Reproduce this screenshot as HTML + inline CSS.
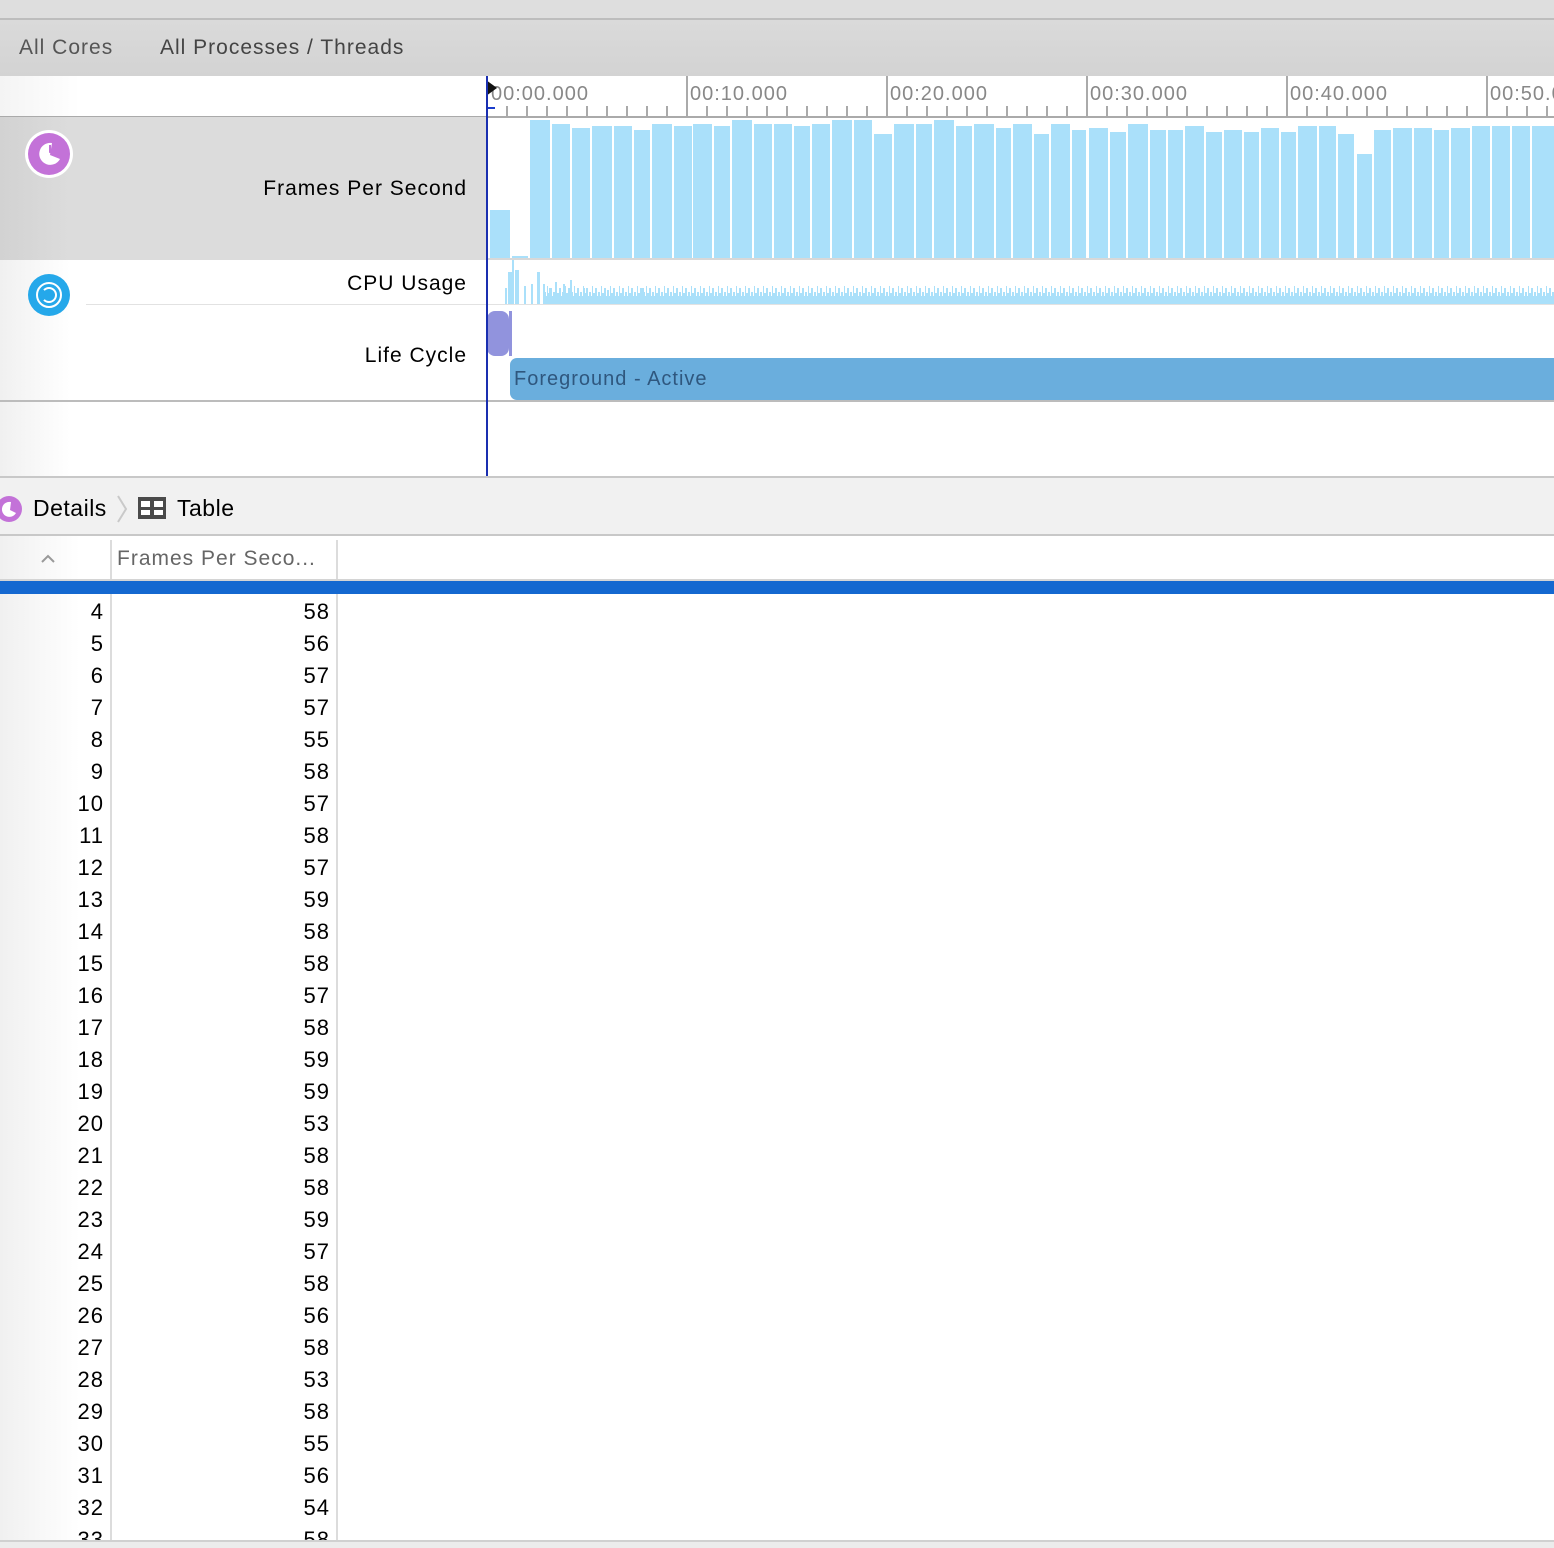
<!DOCTYPE html>
<html><head><meta charset="utf-8"><style>
*{margin:0;padding:0;box-sizing:border-box}
body{width:1554px;height:1548px;overflow:hidden;background:#fff;font-family:"Liberation Sans",sans-serif;position:relative}
.a{position:absolute}
.t{font-size:21px;color:#000;white-space:nowrap;letter-spacing:1px}
</style></head><body>
<div class="a" style="left:0;top:0;width:1554px;height:18px;background:#dedede"></div>
<div class="a" style="left:0;top:18px;width:1554px;height:2px;background:#bdbdbd"></div>
<div class="a" style="left:0;top:20px;width:1554px;height:56px;background:linear-gradient(#dadada,#d3d3d3)"></div>
<div class="a t" style="left:19px;top:36px;color:#555">All Cores</div>
<div class="a t" style="left:160px;top:36px;color:#444">All Processes / Threads</div>

<!-- ruler -->
<div class="a" style="left:0;top:76px;width:487px;height:40px;background:linear-gradient(90deg,#f4f4f4,#fff 80px)"></div>
<svg class="a" style="left:0;top:76px" width="1554" height="42">
<g stroke="#aaa" stroke-width="2">
<line x1="0" y1="41" x2="1554" y2="41"/>
<line x1="687" y1="0" x2="687" y2="41"/><line x1="887" y1="0" x2="887" y2="41"/><line x1="1087" y1="0" x2="1087" y2="41"/><line x1="1287" y1="0" x2="1287" y2="41"/><line x1="1487" y1="0" x2="1487" y2="41"/>
</g>
<g stroke="#aaa" stroke-width="2">
<path d="M507 30V41M527 30V41M547 30V41M567 30V41M587 30V41M607 30V41M627 30V41M647 30V41M667 30V41M707 30V41M727 30V41M747 30V41M767 30V41M787 30V41M807 30V41M827 30V41M847 30V41M867 30V41M907 30V41M927 30V41M947 30V41M967 30V41M987 30V41M1007 30V41M1027 30V41M1047 30V41M1067 30V41M1107 30V41M1127 30V41M1147 30V41M1167 30V41M1187 30V41M1207 30V41M1227 30V41M1247 30V41M1267 30V41M1307 30V41M1327 30V41M1347 30V41M1367 30V41M1387 30V41M1407 30V41M1427 30V41M1447 30V41M1467 30V41M1507 30V41M1527 30V41M1547 30V41"/>
</g>
<g font-family="Liberation Sans" font-size="20" fill="#888" letter-spacing="1">
<text x="491" y="24">00:00.000</text><text x="690" y="24">00:10.000</text><text x="890" y="24">00:20.000</text><text x="1090" y="24">00:30.000</text><text x="1290" y="24">00:40.000</text><text x="1490" y="24">00:50.000</text>
</g>
<path d="M486 4L497 12L486 20Z" fill="#111"/>
<path d="M487 40V32H495" stroke="#1a3ccc" stroke-width="2" fill="none"/>
</svg>

<!-- FPS row -->
<div class="a" style="left:0;top:117px;width:487px;height:143px;background:linear-gradient(90deg,#d2d2d2,#dcdcdc 70px)"></div>
<div class="a" style="left:25px;top:130px;width:48px;height:48px;border-radius:50%;background:#fff"></div>
<div class="a" style="left:28px;top:133px;width:42px;height:42px;border-radius:50%;background:#c372d8"></div>
<svg class="a" style="left:28px;top:133px" width="42" height="42"><path d="M24 10A11 11 0 1 0 32 26L22 22Z" fill="#fff"/><path d="M22 12L22 19L29 22" stroke="#c372d8" stroke-width="2" fill="none"/></svg>
<div class="a t" style="right:1087px;top:177px">Frames Per Second</div>
<svg class="a" style="left:487px;top:117px" width="1067" height="143">
<rect x="0" y="141" width="1067" height="2" fill="#d8d8d8"/>
<g fill="#aae0fa" transform="translate(-487,0)">
<rect x="490" y="93" width="20" height="48"/><rect x="512" y="139" width="16" height="2"/>
<rect x="530" y="3" width="20" height="138"/><rect x="552" y="7" width="18" height="134"/><rect x="572" y="11" width="18" height="130"/><rect x="592" y="9" width="20" height="132"/><rect x="614" y="9" width="18" height="132"/><rect x="634" y="13" width="16" height="128"/><rect x="652" y="7" width="20" height="134"/><rect x="674" y="9" width="18" height="132"/><rect x="693" y="7" width="19" height="134"/><rect x="714" y="9" width="16" height="132"/><rect x="732" y="3" width="20" height="138"/><rect x="754" y="7" width="18" height="134"/><rect x="774" y="7" width="18" height="134"/><rect x="794" y="9" width="16" height="132"/><rect x="812" y="7" width="18" height="134"/><rect x="832" y="3" width="20" height="138"/><rect x="854" y="3" width="18" height="138"/><rect x="874" y="17" width="18" height="124"/><rect x="894" y="7" width="20" height="134"/><rect x="916" y="7" width="16" height="134"/><rect x="934" y="3" width="20" height="138"/><rect x="956" y="9" width="16" height="132"/><rect x="974" y="7" width="20" height="134"/><rect x="996" y="11" width="15" height="130"/><rect x="1013" y="7" width="19" height="134"/><rect x="1034" y="17" width="15" height="124"/><rect x="1051" y="7" width="19" height="134"/><rect x="1072" y="13" width="14" height="128"/><rect x="1089" y="11" width="19" height="130"/><rect x="1110" y="15" width="16" height="126"/><rect x="1128" y="7" width="20" height="134"/><rect x="1150" y="13" width="16" height="128"/><rect x="1168" y="13" width="15" height="128"/><rect x="1185" y="9" width="19" height="132"/><rect x="1206" y="15" width="16" height="126"/><rect x="1224" y="13" width="18" height="128"/><rect x="1244" y="15" width="15" height="126"/><rect x="1261" y="11" width="18" height="130"/><rect x="1281" y="15" width="15" height="126"/><rect x="1298" y="9" width="19" height="132"/><rect x="1319" y="9" width="17" height="132"/><rect x="1338" y="17" width="16" height="124"/><rect x="1357" y="37" width="15" height="104"/><rect x="1374" y="13" width="17" height="128"/><rect x="1393" y="11" width="19" height="130"/><rect x="1414" y="11" width="18" height="130"/><rect x="1434" y="13" width="15" height="128"/><rect x="1451" y="11" width="19" height="130"/><rect x="1472" y="9" width="18" height="132"/><rect x="1492" y="9" width="18" height="132"/><rect x="1512" y="9" width="18" height="132"/><rect x="1532" y="9" width="22" height="132"/>
</g></svg>

<!-- CPU + lifecycle -->
<div class="a" style="left:0;top:260px;width:487px;height:141px;background:linear-gradient(90deg,#f0f0f0,#fff 70px)"></div>
<div class="a" style="left:28px;top:274px;width:42px;height:42px;border-radius:50%;background:#25a8ea"></div>
<div class="a" style="left:36px;top:282px;width:26px;height:26px;border-radius:50%;border:2px solid #fff"></div>
<div class="a" style="left:41px;top:287px;width:16px;height:16px;border-radius:50%;border:2px solid #fff;border-left-color:transparent"></div>
<div class="a t" style="right:1087px;top:272px">CPU Usage</div>
<div class="a" style="left:86px;top:304px;width:1468px;height:1px;background:#e2e2e2"></div>
<div class="a t" style="right:1087px;top:344px">Life Cycle</div>
<svg class="a" style="left:487px;top:260px" width="1067" height="50">
<defs><pattern id="p" width="9" height="20" patternUnits="userSpaceOnUse"><rect x="0" y="8" width="2" height="12" fill="#aae0fa"/><rect x="3" y="12" width="2" height="8" fill="#aae0fa"/><rect x="6" y="6" width="1" height="14" fill="#aae0fa"/><rect x="7" y="13" width="2" height="7" fill="#aae0fa"/></pattern></defs>
<g fill="#aae0fa">
<rect x="18" y="28" width="2" height="16"/><rect x="21" y="12" width="4" height="32"/><rect x="25" y="0" width="2" height="44"/><rect x="28" y="10" width="4" height="34"/>
<rect x="37" y="26" width="2" height="18"/><rect x="44" y="24" width="2" height="20"/><rect x="50" y="12" width="3" height="32"/><rect x="56" y="24" width="2" height="20"/><rect x="62" y="28" width="2" height="16"/><rect x="68" y="22" width="2" height="22"/><rect x="76" y="24" width="2" height="20"/><rect x="83" y="20" width="2" height="24"/><rect x="96" y="28" width="2" height="16"/><rect x="120" y="30" width="2" height="14"/><rect x="155" y="28" width="2" height="16"/>
</g>
<rect x="56" y="24" width="1011" height="20" fill="url(#p)"/>
<rect x="56" y="36" width="1011" height="8" fill="#aae0fa"/>
</svg>
<div class="a" style="left:487px;top:311px;width:22px;height:45px;border-radius:8px;background:#9193dd"></div>
<div class="a" style="left:509px;top:311px;width:3px;height:45px;background:#9193dd"></div>
<div class="a" style="left:510px;top:358px;width:1044px;height:42px;border-radius:7px 0 0 7px;background:#6aaedd"></div>
<div class="a t" style="left:514px;top:368px;color:#2f577e;font-size:20px">Foreground - Active</div>
<div class="a" style="left:0;top:400px;width:1554px;height:2px;background:#bcbcbc"></div>
<div class="a" style="left:0;top:402px;width:487px;height:74px;background:linear-gradient(90deg,#f0f0f0,#fff 70px)"></div>
<div class="a" style="left:486px;top:76px;width:2px;height:400px;background:#1a2fb0"></div>

<!-- details bar -->
<div class="a" style="left:0;top:476px;width:1554px;height:2px;background:#c8c8c8"></div>
<div class="a" style="left:0;top:478px;width:1554px;height:56px;background:#f1f1f1"></div>
<div class="a" style="left:-4px;top:496px;width:26px;height:26px;border-radius:50%;background:#c372d8"></div>
<svg class="a" style="left:-4px;top:496px" width="26" height="26"><path d="M15 6A7.5 7.5 0 1 0 20 17L14 14Z" fill="#fff"/></svg>
<div class="a t" style="left:33px;top:495px;font-size:23px;letter-spacing:0.5px">Details</div>
<svg class="a" style="left:115px;top:494px" width="14" height="30"><path d="M3 2L11 15L3 28" stroke="#c9c9c9" stroke-width="2" fill="none"/></svg>
<svg class="a" style="left:138px;top:497px" width="28" height="22"><rect width="28" height="22" fill="#4a4a4a"/><rect x="3" y="4" width="9" height="6" fill="#fff"/><rect x="16" y="4" width="9" height="6" fill="#fff"/><rect x="3" y="13" width="9" height="5" fill="#fff"/><rect x="16" y="13" width="9" height="5" fill="#fff"/></svg>
<div class="a t" style="left:177px;top:495px;font-size:23px;letter-spacing:0.5px">Table</div>
<div class="a" style="left:0;top:534px;width:1554px;height:2px;background:#c8c8c8"></div>

<!-- table -->
<div class="a" style="left:0;top:536px;width:110px;height:1004px;background:linear-gradient(90deg,#f0f0f0,#fff 80px)"></div>
<div class="a" style="left:110px;top:540px;width:2px;height:1000px;background:#dcdcdc"></div>
<div class="a" style="left:336px;top:540px;width:2px;height:1000px;background:#dcdcdc"></div>
<svg class="a" style="left:40px;top:552px" width="18" height="12"><path d="M2 10L8 4L14 10" stroke="#999" stroke-width="2" fill="none"/></svg>
<div class="a t" style="left:117px;top:547px;color:#666;font-size:21px">Frames Per Seco...</div>
<div class="a" style="left:0;top:579px;width:1554px;height:2px;background:#d4d4d4"></div>
<div class="a" style="left:0;top:581px;width:1554px;height:13px;background:#1468d0;overflow:hidden">
<div class="a t" style="right:1451px;top:-19px;color:#fff">3</div><div class="a t" style="right:1225px;top:-19px;color:#fff">59</div></div>
<div class="a" style="left:0;top:596px;width:340px;height:944px;overflow:hidden;font-size:22px;letter-spacing:1px">
<div style="position:absolute;right:236px;top:0px;text-align:right;line-height:32px">4<br>5<br>6<br>7<br>8<br>9<br>10<br>11<br>12<br>13<br>14<br>15<br>16<br>17<br>18<br>19<br>20<br>21<br>22<br>23<br>24<br>25<br>26<br>27<br>28<br>29<br>30<br>31<br>32<br>33</div>
<div style="position:absolute;right:10px;top:0px;text-align:right;line-height:32px">58<br>56<br>57<br>57<br>55<br>58<br>57<br>58<br>57<br>59<br>58<br>58<br>57<br>58<br>59<br>59<br>53<br>58<br>58<br>59<br>57<br>58<br>56<br>58<br>53<br>58<br>55<br>56<br>54<br>58</div>
</div>
<div class="a" style="left:0;top:1540px;width:1554px;height:2px;background:#d0d0d0"></div>
<div class="a" style="left:0;top:1542px;width:1554px;height:6px;background:#ececec"></div>
</body></html>
